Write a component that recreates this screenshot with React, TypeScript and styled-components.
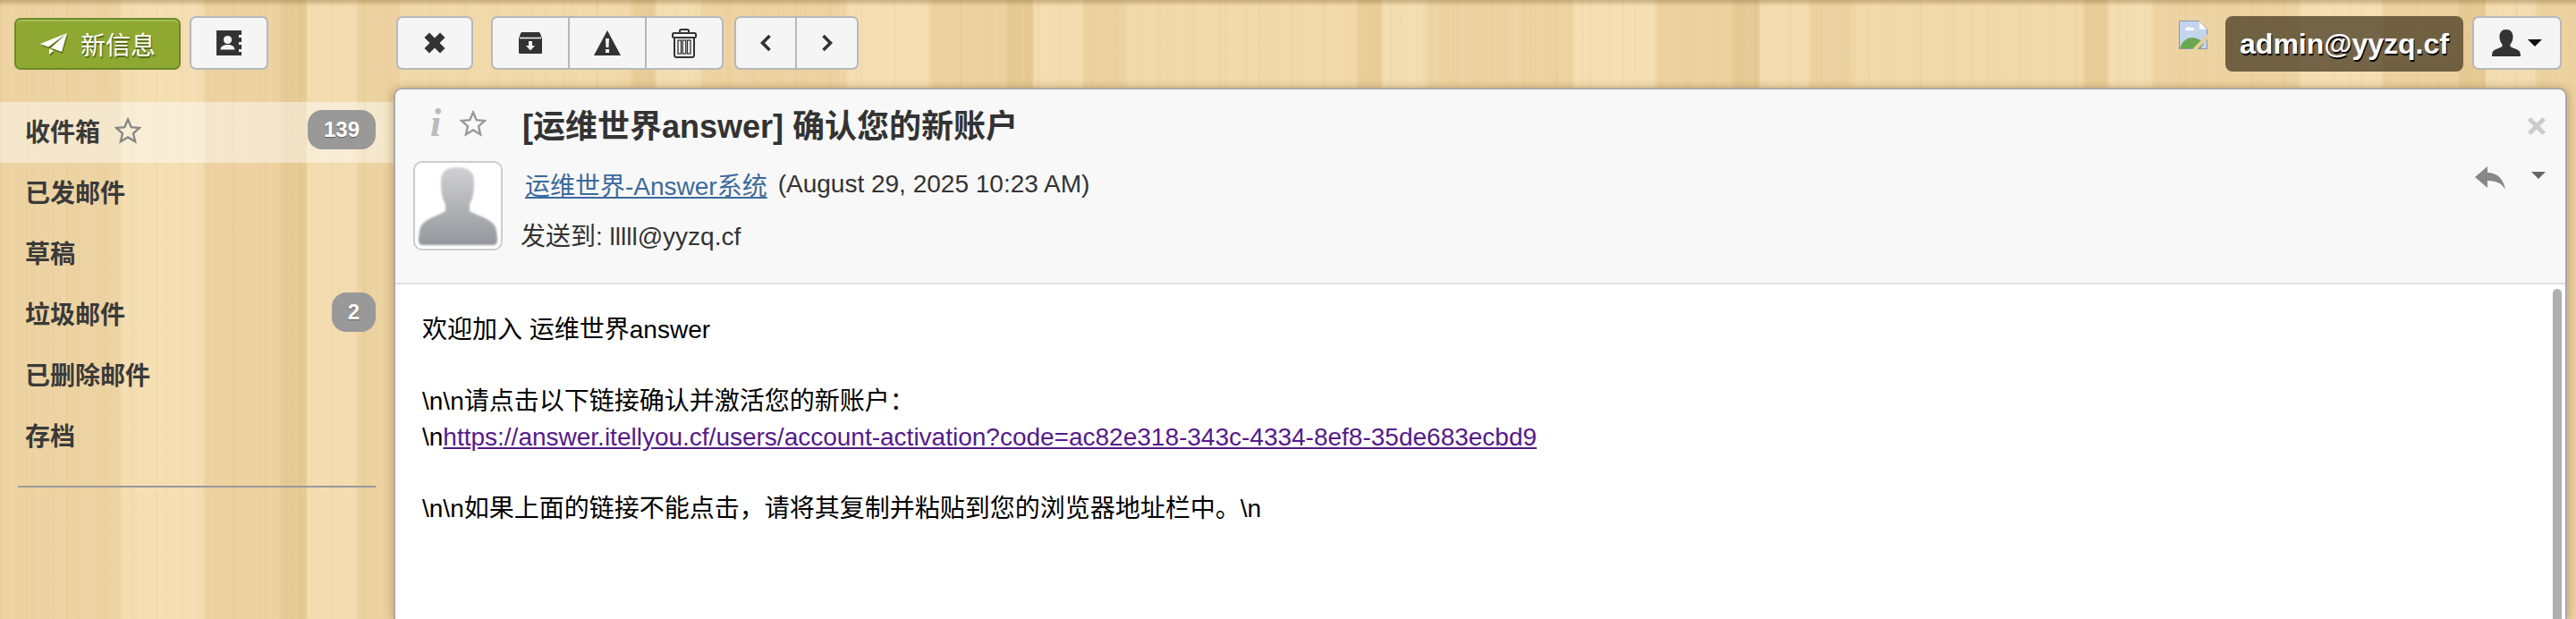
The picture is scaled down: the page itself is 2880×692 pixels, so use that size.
import React from 'react';
import styled, { createGlobalStyle } from 'styled-components';

const FONT = `"Liberation Sans", "Noto Sans CJK SC", sans-serif`;

const GlobalStyle = createGlobalStyle`
  html, body {
    margin: 0;
    padding: 0;
    height: 100%;
    overflow: hidden;
  }
  body {
    font-family: ${FONT};
    color: #333;
  }
`;

// wood tile repeats every 812px, its first plank starts at x=344
const woodPlanks = `repeating-linear-gradient(90deg,
  #f3dcaf 0 53px, #ecd2a0 57px 101px, #f1d9a9 105px 360px, #e8cd98 364px 387px,
  #f3deb1 391px 438px, #edd3a2 442px 601px, #f4deb2 605px 694px, #edd2a0 698px 779px,
  #e6ca94 783px 810px, #f3dcaf 812px)`;

const Page = styled.div`
  position: relative;
  width: 2880px;
  height: 692px;
  overflow: hidden;
  display: flex;
  flex-direction: column;
  background-image:
    linear-gradient(180deg, rgba(120, 90, 40, 0.35) 0, rgba(120, 90, 40, 0) 7px),
    repeating-linear-gradient(90deg, rgba(190, 140, 70, 0.04) 0 2px, transparent 2px 11px, rgba(255, 255, 255, 0.05) 11px 13px, transparent 13px 29px),
    repeating-linear-gradient(90deg, rgba(190, 140, 70, 0.035) 0 3px, transparent 3px 37px),
    ${woodPlanks};
  background-position: 0 0, 0 0, 0 0, 344px 0;
  background-size: 100% 100%, auto, auto, 812px 100%;
`;

const Toolbar = styled.div`
  height: 98px;
  flex: none;
  display: flex;
  align-items: flex-start;
  padding: 18px 16px 0;
  box-sizing: border-box;
`;

const ToolbarLeft = styled.div`
  width: 427px;
  flex: none;
  display: flex;
  gap: 10px;
`;

const ToolGroup = styled.div<{ $gap?: number }>`
  display: flex;
  height: 60px;
  margin-right: ${({ $gap }) => $gap ?? 0}px;
  border: 2px solid #b6b8bb;
  border-radius: 7px;
  background: #f5f5f5;
  box-sizing: border-box;
  overflow: hidden;
`;

const ToolButton = styled.div<{ $width: number }>`
  width: ${({ $width }) => $width}px;
  display: flex;
  align-items: center;
  justify-content: center;
  gap: 8px;
  & + & {
    border-left: 2px solid #b6b8bb;
  }
`;

const ComposeButton = styled.div`
  margin-top: 2px;
  width: 186px;
  height: 58px;
  box-sizing: border-box;
  display: flex;
  align-items: center;
  gap: 15px;
  padding-left: 27px;
  border: 2px solid #6d8a2a;
  border-radius: 7px;
  background: #8ea832;
  box-shadow: inset 0 2px 0 #a6bc55;
  color: #fff;
  font-size: 28px;
  text-shadow: 1px 2px 1px rgba(60, 70, 10, 0.7);

  & svg {
    filter: drop-shadow(1px 2px 0 rgba(60, 70, 10, 0.55));
  }
`;

const ToolbarRight = styled.div`
  margin-left: auto;
  display: flex;
  align-items: flex-start;
`;

const BrokenImage = styled.svg`
  margin: 5px 20px 0 0;
`;

const AccountPill = styled.div`
  height: 62px;
  width: 266px;
  margin-right: 10px;
  border-radius: 8px;
  background: rgba(50, 40, 20, 0.67);
  display: flex;
  align-items: center;
  justify-content: center;
  color: #fff;
  font-size: 32px;
  font-weight: 700;
  text-shadow: 1px 2px 0 #000;
`;

const Content = styled.div`
  flex: 1;
  display: flex;
  min-height: 0;
`;

const Sidebar = styled.nav`
  width: 440px;
  flex: none;
  padding-top: 16px;
  box-sizing: border-box;
`;

const FolderRow = styled.div<{ $active?: boolean }>`
  height: 68px;
  box-sizing: border-box;
  display: flex;
  align-items: center;
  padding: 0 20px 4px 28px;
  background: ${({ $active }) => ($active ? 'rgba(255, 255, 255, 0.46)' : 'transparent')};
`;

const FolderName = styled.span`
  font-size: 28px;
  font-weight: 700;
  color: #3a3a3a;
`;

const FolderStar = styled.span`
  display: flex;
  margin-left: 16px;
`;

const CountBadge = styled.span`
  margin-left: auto;
  height: 44px;
  min-width: 49px;
  padding: 0 18px;
  box-sizing: border-box;
  margin-top: -2px;
  border-radius: 16px;
  background: #999;
  color: #fff;
  display: flex;
  align-items: center;
  justify-content: center;
  font-size: 24px;
  font-weight: 700;
  text-shadow: 0 1px 1px rgba(0, 0, 0, 0.4);
`;

const SideDivider = styled.hr`
  height: 2px;
  margin: 21px 20px 0;
  border: 0;
  background: #999;
`;

const Panel = styled.section`
  flex: 1;
  margin-right: 10px;
  border: 2px solid #a8a9ab;
  border-bottom: 0;
  border-radius: 10px 10px 0 0;
  background: #fff;
  box-shadow: -4px 0 8px rgba(150, 110, 50, 0.28), 4px 0 8px rgba(150, 110, 50, 0.28);
  display: flex;
  flex-direction: column;
  overflow: hidden;
`;

const MailHeader = styled.header`
  height: 218px;
  flex: none;
  box-sizing: border-box;
  background: #f8f8f8;
  border-bottom: 2px solid #e0e0e0;
  padding: 0 22px 0 20px;
`;

const SubjectRow = styled.div`
  height: 80px;
  box-sizing: border-box;
  padding-bottom: 4px;
  display: flex;
  align-items: center;
`;

const InfoMark = styled.span`
  width: 19px;
  margin-left: 19px;
  margin-right: 14px;
  font-family: "Liberation Serif", serif;
  font-style: italic;
  font-weight: 700;
  font-size: 44px;
  line-height: 1;
  color: #bbb;
`;

const Subject = styled.h1`
  margin: 0 0 0 40px;
  font-size: 36px;
  font-weight: 700;
  color: #333;
`;

const DismissIcon = styled.svg`
  margin-left: auto;
  margin-top: 6px;
`;

const MetaRow = styled.div`
  display: flex;
  align-items: flex-start;
`;

const Avatar = styled.div`
  width: 100px;
  height: 100px;
  flex: none;
  box-sizing: border-box;
  border: 2px solid #ccc;
  border-radius: 10px;
  background: #fff;
  padding: 4px;
  overflow: hidden;

  & svg {
    filter: blur(0.8px);
  }
`;

const MetaLines = styled.div`
  margin: -2px 0 0 20px;
  display: flex;
  flex-direction: column;
  font-size: 28px;
  color: #333;
`;

const SenderLine = styled.div`
  height: 56px;
  display: flex;
  align-items: center;
  margin-left: 5px;
`;

const SenderLink = styled.a`
  color: #3b6a9c;
  text-decoration: underline;
  margin-right: 12px;
`;

const ToLine = styled.div`
  height: 56px;
  display: flex;
  align-items: center;
`;

const MailActions = styled.div`
  margin-left: auto;
  padding-top: 6px;
  display: flex;
  align-items: flex-start;
  gap: 29px;
`;

const MailBody = styled.div`
  position: relative;
  flex: 1;
  padding: 31px 16px 0 30px;
  font-size: 28px;
  line-height: 40px;
  color: #000;
`;

const BodyLine = styled.div`
  min-height: 40px;
`;

const VisitedLink = styled.a`
  color: #551a8b;
  text-decoration: underline;
`;

const ScrollThumb = styled.div`
  position: absolute;
  top: 5px;
  bottom: 0;
  right: 4px;
  width: 10px;
  border-radius: 5px 5px 0 0;
  background: #b0b0b0;
`;

const PlaneIcon = () => (
  <svg width="30" height="24" viewBox="0 0 30 24" fill="#fff">
    <path d="M30 0 0 12l9 3.5z" />
    <path d="M30 0 12 16.5 24 21z" />
    <path d="M10 17.5V24l5-4.5z" />
  </svg>
);

const ContactsIcon = () => (
  <svg width="28" height="28" viewBox="0 0 28 28">
    <path
      fill="#333"
      d="M0 0h28v5h-3v3h3v5h-3v3h3v5h-3v3h3v4H0z"
    />
    <circle cx="12.5" cy="10.5" r="4.6" fill="#f5f5f5" />
    <path fill="#f5f5f5" d="M4.5 21.5c0-3.5 3-4.5 5.5-5.5h5c2.5 1 5.500 2 5.500 5.500z" />
  </svg>
);

const CloseIcon = () => (
  <svg width="24" height="24" viewBox="0 0 24 24" fill="#333">
    <path d="M6 .5 12 6.500 18 .5 23.500 6 17.500 12l6 6L18 23.500l-6-6-6 6L.5 18l6-6-6-6z" />
  </svg>
);

const ArchiveIcon = () => (
  <svg width="26" height="24" viewBox="0 0 26 24">
    <path
      fill="#333"
      d="M4 0h18c1 0 1.500.5 2 1.500L26 7v15.500c0 1-.5 1.500-1.500 1.500h-23C.5 24 0 23.500 0 22.500V7l2-5.500C2.500.5 3 0 4 0z"
    />
    <path fill="none" stroke="#f5f5f5" strokeWidth="1.500" d="M1 6.500h24" />
    <path fill="#f5f5f5" d="M11 10h4v5h3l-5 5.500L8 15h3z" />
  </svg>
);

const WarningIcon = () => (
  <svg width="30" height="28" viewBox="0 0 30 28">
    <path fill="#333" d="M15 0 30 28H0z" />
    <path fill="#f5f5f5" d="M13 9h4l-.5 10h-3z" />
    <rect x="13" y="21" width="4" height="4" fill="#f5f5f5" />
  </svg>
);

const TrashIcon = () => (
  <svg width="28" height="33" viewBox="0 0 28 33" fill="none" stroke="#333" strokeWidth="2">
    <path d="M9 5V2.500C9 1.500 9.500 1 10.500 1h7c1 0 1.500.5 1.500 1.500V5" />
    <rect x="1" y="5" width="26" height="5" rx="1.500" />
    <path d="M3 10v19.500C3 31 4 32 5.500 32h17c1.500 0 2.500-1 2.500-2.500V10" />
    <rect x="7" y="13" width="3.500" height="15" strokeWidth="1.300" />
    <rect x="12.250" y="13" width="3.500" height="15" strokeWidth="1.300" />
    <rect x="17.500" y="13" width="3.500" height="15" strokeWidth="1.300" />
  </svg>
);

const ChevronIcon = ({ right }: { right?: boolean }) => (
  <svg width="13" height="20" viewBox="0 0 13 20" fill="none" stroke="#333" strokeWidth="3.600">
    <path d={right ? 'M2.500 2l8 8-8 8' : 'M10.500 2l-8 8 8 8'} />
  </svg>
);

const UserIcon = () => (
  <svg width="32" height="30" viewBox="0 0 32 30" fill="#333">
    <path d="M16 0c5 0 7.500 3.500 7.500 8 0 3.500-1 6.500-3 8.500V19c2 1.500 8 3 10 5 1 1.200 1.500 3 1.500 6H0c0-3 .5-4.800 1.500-6 2-2 8-3.500 10-5v-2.500c-2-2-3-5-3-8.500 0-4.500 2.500-8 7.500-8z" />
  </svg>
);

const Caret = ({ color, width }: { color: string; width: number }) => (
  <svg width={width} height={width / 2} viewBox="0 0 16 8" fill={color}>
    <path d="M0 0h16L8 8z" />
  </svg>
);

const StarIcon = ({ color, size }: { color: string; size: number }) => (
  <svg width={size} height={size} viewBox="0 0 30 30" fill="none" stroke={color} strokeWidth="2.400">
    <path d="M15 2.500l3.700 8.600 9.300.9-7 6.100 2.100 9.100-8.100-4.800-8.100 4.800 2.100-9.100-7-6.100 9.300-.9z" />
  </svg>
);

function App() {
  const folders = [
    { name: '收件箱', count: 139, active: true },
    { name: '已发邮件' },
    { name: '草稿' },
    { name: '垃圾邮件', count: 2 },
    { name: '已删除邮件' },
    { name: '存档' },
  ];

  return (
    <>
      <GlobalStyle />
      <Page>
        <Toolbar>
          <ToolbarLeft>
            <ComposeButton>
              <PlaneIcon />
              <span>新信息</span>
            </ComposeButton>
            <ToolGroup>
              <ToolButton $width={84}>
                <ContactsIcon />
              </ToolButton>
            </ToolGroup>
          </ToolbarLeft>
          <ToolGroup $gap={20}>
            <ToolButton $width={82}>
              <CloseIcon />
            </ToolButton>
          </ToolGroup>
          <ToolGroup $gap={12}>
            <ToolButton $width={84}>
              <ArchiveIcon />
            </ToolButton>
            <ToolButton $width={84}>
              <WarningIcon />
            </ToolButton>
            <ToolButton $width={84}>
              <TrashIcon />
            </ToolButton>
          </ToolGroup>
          <ToolGroup>
            <ToolButton $width={66}>
              <ChevronIcon />
            </ToolButton>
            <ToolButton $width={67}>
              <ChevronIcon right />
            </ToolButton>
          </ToolGroup>
          <ToolbarRight>
            <BrokenImage width="32" height="32" viewBox="0 0 32 32">
              <path fill="#c3d4ee" stroke="#8d97a6" strokeWidth="1" d="M.5.5h22l9 9v22H.5z" />
              <path fill="#fff" d="M23 1v8.500h8z" />
              <path fill="#fff" d="M7 11c0-3 4-5 6-3 3-1 5 1 4 3z" />
              <path fill="#6aa84f" d="M1 31c3-9 9-12 14-12s10 3 13 7l-4 5z" />
              <path stroke="#e8cf9f" strokeWidth="4" d="M17 33 33 17" />
            </BrokenImage>
            <AccountPill>admin@yyzq.cf</AccountPill>
            <ToolGroup>
              <ToolButton $width={96}>
                <UserIcon />
                <Caret color="#111" width={16} />
              </ToolButton>
            </ToolGroup>
          </ToolbarRight>
        </Toolbar>
        <Content>
          <Sidebar>
            {folders.map((folder) => (
              <FolderRow key={folder.name} $active={folder.active}>
                <FolderName>{folder.name}</FolderName>
                {folder.active && (
                  <FolderStar>
                    <StarIcon color="#888" size={30} />
                  </FolderStar>
                )}
                {folder.count !== undefined && <CountBadge>{folder.count}</CountBadge>}
              </FolderRow>
            ))}
            <SideDivider />
          </Sidebar>
          <Panel>
            <MailHeader>
              <SubjectRow>
                <InfoMark>i</InfoMark>
                <StarIcon color="#999" size={30} />
                <Subject>[运维世界answer] 确认您的新账户</Subject>
                <DismissIcon width="20" height="20" viewBox="0 0 20 20" fill="#ccc">
                  <path d="M3.500 0 10 6.500 16.500 0 20 3.500 13.500 10l6.500 6.500-3.500 3.500L10 13.500 3.500 20 0 16.500 6.500 10 0 3.500z" />
                </DismissIcon>
              </SubjectRow>
              <MetaRow>
                <Avatar>
                  <svg width="88" height="88" viewBox="0 0 88 88">
                    <defs>
                      <linearGradient id="avatarShade" x1="0" y1="0" x2="0" y2="1">
                        <stop offset="0" stopColor="#d0d0d4" />
                        <stop offset="1" stopColor="#96979c" />
                      </linearGradient>
                    </defs>
                    <path
                      fill="url(#avatarShade)"
                      d="M43 1c13 0 19 6 19 15 0 12-1 20-5 26v8c6 4 23 8 28 16 2 4 3 12 3 17 0 3-2 5-4 5H4c-2 0-4-2-4-5 0-5 1-13 3-17 5-8 22-12 27-16v-8c-4-6-5-14-5-26C25 7 30 1 43 1z"
                    />
                  </svg>
                </Avatar>
                <MetaLines>
                  <SenderLine>
                    <SenderLink>运维世界-Answer系统</SenderLink>
                    <span>(August 29, 2025 10:23 AM)</span>
                  </SenderLine>
                  <ToLine>发送到: lllll@yyzq.cf</ToLine>
                </MetaLines>
                <MailActions>
                  <svg width="34" height="26" viewBox="0 0 34 26" fill="#888">
                    <path d="M14 0v7c10 0 18 6 20 19-4-7-10-10-20-10v8L0 12z" />
                  </svg>
                  <span>
                    <Caret color="#666" width={16} />
                  </span>
                </MailActions>
              </MetaRow>
            </MailHeader>
            <MailBody>
              <BodyLine>欢迎加入 运维世界answer</BodyLine>
              <BodyLine />
              <BodyLine>\n\n请点击以下链接确认并激活您的新账户：</BodyLine>
              <BodyLine>
                \n
                <VisitedLink>https://answer.itellyou.cf/users/account-activation?code=ac82e318-343c-4334-8ef8-35de683ecbd9</VisitedLink>
              </BodyLine>
              <BodyLine />
              <BodyLine>\n\n如果上面的链接不能点击，请将其复制并粘贴到您的浏览器地址栏中。\n</BodyLine>
              <ScrollThumb />
            </MailBody>
          </Panel>
        </Content>
      </Page>
    </>
  );
}

export default App;
